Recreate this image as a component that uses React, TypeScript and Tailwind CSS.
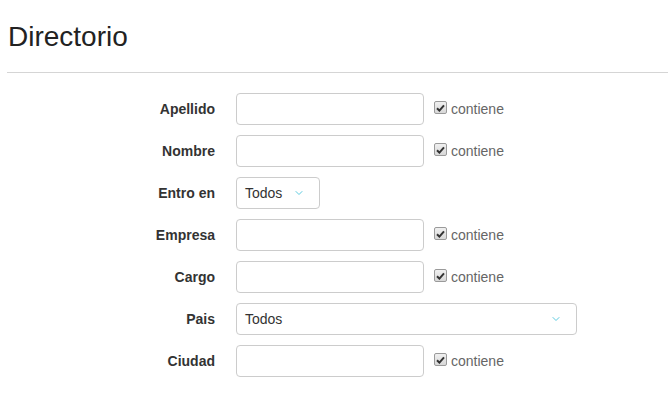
import { ChevronDown } from "lucide-react";

const ROWS: { label: string; kind: "text" | "small" | "wide" }[] = [
  { label: "Apellido", kind: "text" },
  { label: "Nombre", kind: "text" },
  { label: "Entro en", kind: "small" },
  { label: "Empresa", kind: "text" },
  { label: "Cargo", kind: "text" },
  { label: "Pais", kind: "wide" },
  { label: "Ciudad", kind: "text" },
];

function Check() {
  return (
    <span className="w-[13px] h-[13px] mt-[-3px] rounded-[2px] border border-[#9a9a9a] bg-gradient-to-b from-[#f0f0f0] to-[#d8d8d8] grid place-items-center">
      <svg width="9" height="8" viewBox="0 0 9 8">
        <path d="M1 4.2 L3.4 6.6 L8 1.4" fill="none" stroke="#333" strokeWidth="2" />
      </svg>
    </span>
  );
}

function Select({ wide }: { wide?: boolean }) {
  return (
    <div
      className={
        "h-8 rounded border border-[#ccc] bg-white flex items-center justify-between pl-[8px] text-[14px] text-[#333] " +
        (wide ? "w-[341px] pr-[14px]" : "w-[84px] pr-[14px]")
      }
    >
      <span>Todos</span>
      <ChevronDown size={12} strokeWidth={1.75} className="text-[#45c2da]" />
    </div>
  );
}

export default function App() {
  return (
    <div className="min-h-screen bg-white text-[#333]" style={{ fontFamily: '"Liberation Sans", Arial, sans-serif' }}>
      <h1 className="pl-[8px] pt-[21px] text-[28px] leading-[32px] font-normal text-[#222]">Directorio</h1>
      <hr className="ml-[7px] mt-[19px] border-0 border-t border-[#d5d5d5]" />
      <div className="mt-[20px] flex flex-col gap-[10px]">
        {ROWS.map((r) => (
          <div key={r.label} className="flex items-center">
            <label className="w-[215px] text-right text-[14px] font-bold text-[#333]">{r.label}</label>
            <div className="ml-[21px] flex items-center">
              {r.kind === "text" && (
                <>
                  <div className="w-[188px] h-8 rounded border border-[#ccc] bg-white" />
                  <div className="ml-[10px] flex items-center gap-[4px]">
                    <Check />
                    <span className="text-[14px] text-[#666]">contiene</span>
                  </div>
                </>
              )}
              {r.kind === "small" && <Select />}
              {r.kind === "wide" && <Select wide />}
            </div>
          </div>
        ))}
      </div>
    </div>
  );
}
